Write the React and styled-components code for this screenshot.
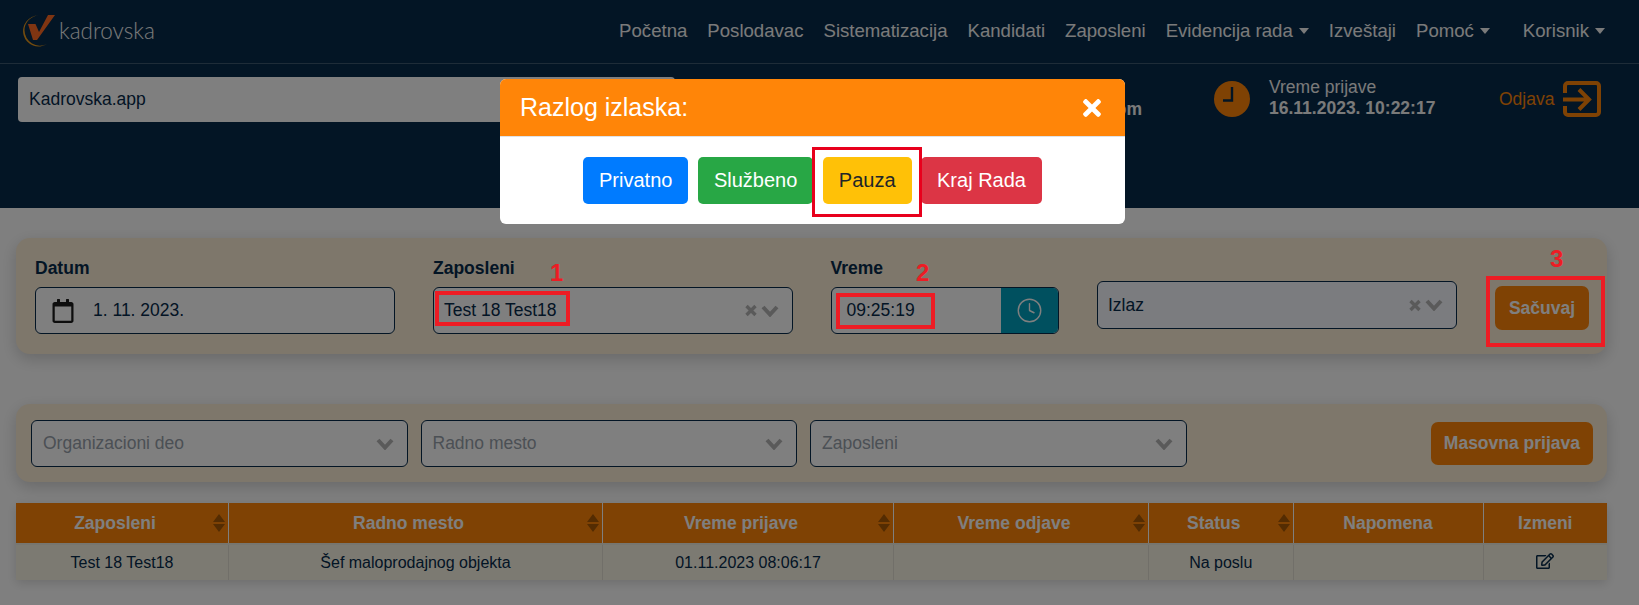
import styled, { createGlobalStyle } from "styled-components";
import { FaRegCalendar, FaRegEdit, FaTimes } from "react-icons/fa";
import { Clock } from "lucide-react";

const GlobalStyle = createGlobalStyle`
  html, body {
    margin: 0;
    padding: 0;
    background: #ffffff;
  }
  * {
    box-sizing: border-box;
  }
  body {
    font-family: "Liberation Sans", Arial, sans-serif;
    color: #062a4a;
  }
`;

const Page = styled.div`
  position: relative;
  width: 1639px;
  height: 605px;
  overflow: hidden;
  background: #ffffff;
`;

const Header = styled.header`
  height: 208px;
  background: #062a4a;
`;

const Nav = styled.nav`
  display: flex;
  align-items: center;
  height: 64px;
  padding: 0 34px 2px 21px;
  border-bottom: 1px solid #3d5870;
`;

const Logo = styled.div`
  display: flex;
  align-items: center;
  gap: 4px;
`;

const LogoText = styled.span`
  font-family: "Lato", sans-serif;
  font-size: 22.5px;
  font-weight: 300;
  color: #f4f4f4;
`;

const NavLinks = styled.div`
  display: flex;
  gap: 20px;
  margin-left: auto;
`;

const NavLink = styled.a`
  display: flex;
  align-items: center;
  margin-left: ${(props) => (props.$push ? "13px" : "0")};
  font-size: 18.6px;
  color: #f4f4f4;
  white-space: nowrap;

  ${(props) =>
    props.$caret &&
    `&::after {
      content: "";
      margin-left: 6px;
      border-top: 6px solid #f4f4f4;
      border-left: 5px solid transparent;
      border-right: 5px solid transparent;
    }`}
`;

const SubHeader = styled.div`
  display: flex;
  align-items: flex-start;
  padding: 13px 0 0 18px;

  > * {
    flex-shrink: 0;
  }
`;

const CompanyInput = styled.div`
  display: flex;
  align-items: center;
  width: 657px;
  height: 45px;
  padding-left: 11px;
  border-radius: 4px;
  background: #ffffff;
  font-size: 17.5px;
  color: #062a4a;
`;

const UserMail = styled.div`
  width: 467px;
  padding-top: 22px;
  font-size: 17.5px;
  font-weight: bold;
  text-align: right;
  color: #f4f4f4;
`;

const LoginTime = styled.div`
  display: flex;
  gap: 19px;
  width: 285px;
  margin: 4px 0 0 72px;
  color: #f4f4f4;
`;

const LoginText = styled.div`
  font-size: 17.5px;
  line-height: 21px;
  margin-top: -4px;

  strong {
    display: block;
  }
`;

const Logout = styled.div`
  display: flex;
  align-items: center;
  gap: 9px;
  margin-top: 4px;
  font-size: 17.5px;
  color: #ff8508;
`;

const Panel = styled.section`
  display: flex;
  margin: ${(props) => props.$margin} 32px 0 16px;
  padding: ${(props) => props.$padding};
  border-radius: 14px;
  background: #fdeed6;
  box-shadow: 0 5px 16px rgba(0, 0, 0, 0.18);
`;

const EntryPanel = styled(Panel)`
  display: grid;
  grid-template-columns: 360px 359.5px 228.5px 360px 94px;
  column-gap: 38px;
`;

const Field = styled.div`
  display: flex;
  flex-direction: column;
  align-self: end;
`;

const Label = styled.label`
  height: 21px;
  margin-bottom: 8px;
  font-size: 17.5px;
  line-height: 21px;
  font-weight: bold;
  color: #062a4a;
`;

const Control = styled.div`
  display: flex;
  align-items: center;
  height: ${(props) => props.$height || "47px"};
  margin-bottom: ${(props) => props.$bottom || "0"};
  padding: 0 ${(props) => props.$right || "13px"} 0 ${(props) => props.$left || "10px"};
  overflow: hidden;
  border: 1px solid #062a4a;
  border-radius: 6px;
  background: ${(props) => props.$bg || "#ffffff"};
  font-size: 17.5px;
  color: #062a4a;
`;

const Placeholder = styled.span`
  font-size: 17.5px;
  color: #97a0aa;
`;

const ControlIcons = styled.div`
  display: flex;
  align-items: center;
  gap: 4px;
  margin-left: auto;
`;

const DateText = styled.span`
  margin-left: 18px;
`;

const TimeAddon = styled.div`
  display: flex;
  align-items: center;
  justify-content: center;
  align-self: stretch;
  width: 57px;
  margin-left: auto;
  background: #00a0be;
  color: #ffffff;
`;

const OrangeButton = styled.button`
  height: ${(props) => props.$height};
  margin: ${(props) => props.$margin || "0"};
  padding: ${(props) => props.$padding || "0"};
  border: 0;
  border-radius: 7px;
  background: #ff8508;
  font-family: inherit;
  font-size: 17.5px;
  font-weight: bold;
  color: #ffffff;
  white-space: nowrap;
`;

const FilterSelect = styled(Control)`
  width: 376.5px;
  margin-right: 13px;
`;

const Table = styled.table`
  width: 1591px;
  margin: 21px 0 0 16px;
  border-collapse: collapse;
  table-layout: fixed;
  box-shadow: 0 3px 10px rgba(0, 0, 0, 0.14);
`;

const Th = styled.th`
  position: relative;
  height: 41px;
  padding: 0 ${(props) => (props.$sort ? "14px" : "0")} 0 0;
  border-left: 1px solid #ffffff;
  border-bottom: 2px solid #efece0;
  background: #ff8508;
  font-size: 17.5px;
  color: #ffffff;

  &:first-child {
    border-left: 0;
  }
`;

const SortIcon = styled.svg`
  position: absolute;
  top: 11px;
  right: 3px;
`;

const Td = styled.td`
  height: 36px;
  padding: 0;
  border-left: 1px solid #e2dfd2;
  background: #f9f5e5;
  font-size: 16px;
  text-align: center;
  color: #062a4a;

  &:first-child {
    border-left: 0;
  }
`;

const Backdrop = styled.div`
  position: absolute;
  inset: 0;
  padding: 79px 0 0 500px;
  background: rgba(0, 0, 0, 0.5);
`;

const Modal = styled.div`
  width: 625px;
  height: 145px;
  overflow: hidden;
  border-radius: 6px;
  background: #ffffff;
`;

const ModalHeader = styled.div`
  display: flex;
  align-items: center;
  justify-content: space-between;
  height: 58px;
  padding: 0 20px;
  border-bottom: 1px solid #dee2e6;
  background: #ff8508;
  font-size: 25px;
  color: #ffffff;
`;

const ModalBody = styled.div`
  display: flex;
  justify-content: center;
  gap: 9.5px;
  padding-top: 20px;
`;

const ModalButton = styled.button`
  height: 47px;
  padding: 0 16px;
  border: 0;
  border-radius: 5px;
  background: ${(props) => props.$bg};
  font-family: inherit;
  font-size: 20px;
  color: ${(props) => props.$fg || "#ffffff"};
`;

const MarkBox = styled.div`
  position: absolute;
  left: ${(props) => props.$x}px;
  top: ${(props) => props.$y}px;
  width: ${(props) => props.$w}px;
  height: ${(props) => props.$h}px;
  border: ${(props) => props.$line || 4}px solid ${(props) => props.$color || "#ed1c24"};
`;

const MarkNumber = styled.span`
  position: absolute;
  left: ${(props) => props.$x}px;
  top: ${(props) => props.$y}px;
  font-size: 24px;
  line-height: 24px;
  font-weight: bold;
  color: #ed1c24;
`;

const columns = [
  { name: "Zaposleni", width: 212.5, sort: true },
  { name: "Radno mesto", width: 374, sort: true },
  { name: "Vreme prijave", width: 291, sort: true },
  { name: "Vreme odjave", width: 255, sort: true },
  { name: "Status", width: 144.5, sort: true },
  { name: "Napomena", width: 190 },
  { name: "Izmeni", width: 124 },
];

const navItems = [
  { name: "Početna" },
  { name: "Poslodavac" },
  { name: "Sistematizacija" },
  { name: "Kandidati" },
  { name: "Zaposleni" },
  { name: "Evidencija rada", caret: true },
  { name: "Izveštaji" },
  { name: "Pomoć", caret: true },
  { name: "Korisnik", caret: true, push: true },
];

function LogoMark() {
  return (
    <svg width="34" height="32" viewBox="0 0 34 32">
      <path d="M18 .5 A15.5 15.5 0 1 0 26 29 A15.5 15.5 0 0 1 3.5 15.5 A15 15 0 0 1 18 .5Z" fill="#e8981c" />
      <path d="M7 9 H14.5 L18 17 L27 0 H34 L16 25 H12Z" fill="#ff6a24" />
    </svg>
  );
}

function ClockBadge() {
  return (
    <svg width="36" height="36" viewBox="0 0 36 36">
      <circle cx="18" cy="18" r="18" fill="#ff8508" />
      <path d="M18 6 V19.5 H9" fill="none" stroke="#062a4a" strokeWidth="2.4" />
    </svg>
  );
}

function LogoutIcon() {
  return (
    <svg width="38" height="36" viewBox="0 0 38 36">
      <path
        d="M2 12 V5 A3 3 0 0 1 5 2 H33 A3 3 0 0 1 36 5 V31 A3 3 0 0 1 33 34 H5 A3 3 0 0 1 2 31 V25"
        fill="none"
        stroke="#ff8508"
        strokeWidth="4"
      />
      <path d="M0 18.5 H27 M16 8.5 L26 18.5 L16 28.5" fill="none" stroke="#ff8508" strokeWidth="4" />
    </svg>
  );
}

function SortArrows() {
  return (
    <SortIcon width="12" height="18" viewBox="0 0 12 18">
      <path d="M6 0 L12 8 H0Z M0 10 H12 L6 18Z" fill="#a85804" />
    </SortIcon>
  );
}

function SelectIcons({ clear }) {
  return (
    <ControlIcons>
      {clear && (
        <svg width="12" height="13" viewBox="0 0 12 13">
          <path d="M1.5 2 L10.5 11 M10.5 2 L1.5 11" stroke="#b4b4b4" strokeWidth="3.4" />
        </svg>
      )}
      <svg width="18" height="12" viewBox="0 0 18 12">
        <path d="M2 2 L9 9.5 L16 2" fill="none" stroke="#b4b4b4" strokeWidth="4" />
      </svg>
    </ControlIcons>
  );
}

function App() {
  return (
    <Page>
      <GlobalStyle />
      <Header>
        <Nav>
          <Logo>
            <LogoMark />
            <LogoText>kadrovska</LogoText>
          </Logo>
          <NavLinks>
            {navItems.map((item) => (
              <NavLink key={item.name} $caret={item.caret} $push={item.push}>
                {item.name}
              </NavLink>
            ))}
          </NavLinks>
        </Nav>
        <SubHeader>
          <CompanyInput>Kadrovska.app</CompanyInput>
          <UserMail>test@kadrovska.com</UserMail>
          <LoginTime>
            <ClockBadge />
            <LoginText>
              Vreme prijave
              <strong>16.11.2023. 10:22:17</strong>
            </LoginText>
          </LoginTime>
          <Logout>
            Odjava
            <LogoutIcon />
          </Logout>
        </SubHeader>
      </Header>

      <EntryPanel $margin="30px" $padding="20px 0 20px 19px">
        <Field>
          <Label>Datum</Label>
          <Control $left="15px">
            <FaRegCalendar size={24} color="#1b1b1b" />
            <DateText>1. 11. 2023.</DateText>
          </Control>
        </Field>
        <Field>
          <Label>Zaposleni</Label>
          <Control>
            Test 18 Test18
            <SelectIcons clear />
          </Control>
        </Field>
        <Field>
          <Label>Vreme</Label>
          <Control $left="15px" $right="0">
            09:25:19
            <TimeAddon>
              <Clock size={27} strokeWidth={1.25} />
            </TimeAddon>
          </Control>
        </Field>
        <Field>
          <Control $height="48px" $bottom="5px" $bg="#f6f8ff">
            Izlaz
            <SelectIcons clear />
          </Control>
        </Field>
        <Field>
          <OrangeButton $height="44px" $margin="0 0 4px">
            Sačuvaj
          </OrangeButton>
        </Field>
      </EntryPanel>

      <Panel $margin="50px" $padding="16px 14px 15px 15px">
        <FilterSelect $left="11px">
          <Placeholder>Organizacioni deo</Placeholder>
          <SelectIcons />
        </FilterSelect>
        <FilterSelect $left="11px">
          <Placeholder>Radno mesto</Placeholder>
          <SelectIcons />
        </FilterSelect>
        <FilterSelect $left="11px">
          <Placeholder>Zaposleni</Placeholder>
          <SelectIcons />
        </FilterSelect>
        <OrangeButton $height="43px" $margin="2px 0 0 auto" $padding="0 13px">
          Masovna prijava
        </OrangeButton>
      </Panel>

      <Table>
        <colgroup>
          {columns.map((col) => (
            <col key={col.name} width={col.width} />
          ))}
        </colgroup>
        <thead>
          <tr>
            {columns.map((col) => (
              <Th key={col.name} $sort={col.sort}>
                {col.name}
                {col.sort && <SortArrows />}
              </Th>
            ))}
          </tr>
        </thead>
        <tbody>
          <tr>
            <Td>Test 18 Test18</Td>
            <Td>Šef maloprodajnog objekta</Td>
            <Td>01.11.2023 08:06:17</Td>
            <Td />
            <Td>Na poslu</Td>
            <Td />
            <Td>
              <FaRegEdit size={18} />
            </Td>
          </tr>
        </tbody>
      </Table>

      <Backdrop>
        <Modal>
          <ModalHeader>
            Razlog izlaska:
            <FaTimes size={26} />
          </ModalHeader>
          <ModalBody>
            <ModalButton $bg="#007bff">Privatno</ModalButton>
            <ModalButton $bg="#28a745">Službeno</ModalButton>
            <ModalButton $bg="#ffc107" $fg="#212529">
              Pauza
            </ModalButton>
            <ModalButton $bg="#dc3545">Kraj Rada</ModalButton>
          </ModalBody>
        </Modal>
      </Backdrop>

      <MarkBox $x={812} $y={147} $w={110} $h={70} $line={3} $color="#e8001c" />
      <MarkBox $x={435} $y={291} $w={135} $h={35} />
      <MarkBox $x={836} $y={293} $w={99} $h={36} />
      <MarkBox $x={1486} $y={276} $w={119} $h={71} />
      <MarkNumber $x={550} $y={261}>1</MarkNumber>
      <MarkNumber $x={916} $y={261}>2</MarkNumber>
      <MarkNumber $x={1550} $y={247}>3</MarkNumber>
    </Page>
  );
}

export default App;
